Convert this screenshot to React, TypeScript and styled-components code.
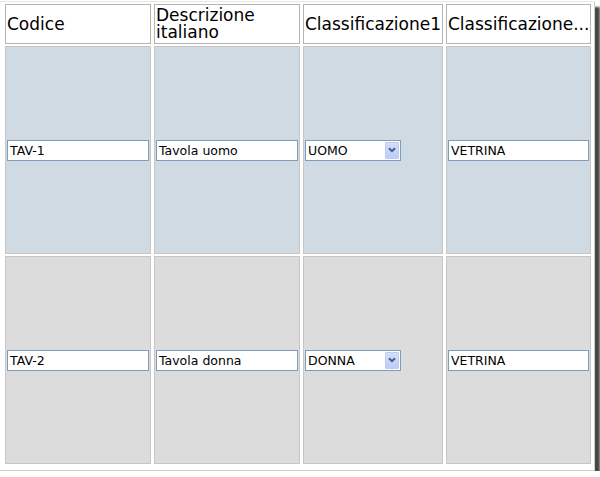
import React from "react";
import styled, { createGlobalStyle } from "styled-components";

const GlobalStyle = createGlobalStyle`
    html, body {
        margin: 0;
        padding: 0;
        background: #ffffff;
    }

    body {
        font-family: "DejaVu Sans", Verdana, sans-serif;
    }
`

const Frame = styled.div`
    width: 595px;
    height: 470px;
    margin-top: 1px;
    box-sizing: border-box;
    border-top: 1px solid #ebe7da;
    border-right: 1px solid #cfcfcf;
    border-bottom: 1px solid #cfcfcf;
    background: #ffffff;
    box-shadow: 5px 6px 2px rgba(0, 0, 0, 0.72);
    padding-left: 2px;
`

const Grid = styled.table`
    table-layout: fixed;
    width: 592px;
    border-collapse: separate;
    border-spacing: 3px 2px;
`

const HeaderCell = styled.th<{ $nowrap?: boolean }>`
    height: 40px;
    box-sizing: border-box;
    padding: 0 1px;
    border: 1px solid #b4b4b4;
    background: #ffffff;
    color: #000000;
    font-size: 17px;
    line-height: 17px;
    font-weight: normal;
    text-align: left;
    vertical-align: middle;
    white-space: ${({ $nowrap }) => ($nowrap ? "nowrap" : "normal")};
    overflow: hidden;
`

const Cell = styled.td<{ $tone: "blue" | "grey" }>`
    height: 208px;
    box-sizing: border-box;
    padding: 0 1px;
    border: 1px solid #c6c6c6;
    background: ${({ $tone }) => ($tone === "blue" ? "#cfdae3" : "#dcdcdc")};
    vertical-align: middle;
`

const TextBox = styled.input`
    display: block;
    width: 100%;
    height: 21px;
    box-sizing: border-box;
    margin: 0;
    padding: 0 2px;
    border: 1px solid #7f9db9;
    background: #ffffff;
    color: #000000;
    font-family: "DejaVu Sans", Verdana, sans-serif;
    font-size: 12.5px;
    outline: none;
`

const SelectBox = styled.div`
    display: flex;
    align-items: center;
    width: 96px;
    height: 21px;
    box-sizing: border-box;
    border: 1px solid #7f9db9;
    background: #ffffff;
    font-size: 12.5px;
    color: #000000;
`

const SelectValue = styled.span`
    flex: 1;
    padding-left: 2px;
`

const SelectArrow = styled.span`
    display: flex;
    align-items: center;
    justify-content: center;
    width: 14px;
    height: 17px;
    margin-right: 1px;
    box-sizing: border-box;
    border: 1px solid #bccbf0;
    border-radius: 1px;
    background: linear-gradient(#d3defd, #bccdf8);
`

type Row = {
    codice: string
    descrizione: string
    classe1: string
    classe2: string
    tone: "blue" | "grey"
}

const rows: Row[] = [
    { codice: "TAV-1", descrizione: "Tavola uomo", classe1: "UOMO", classe2: "VETRINA", tone: "blue" },
    { codice: "TAV-2", descrizione: "Tavola donna", classe1: "DONNA", classe2: "VETRINA", tone: "grey" },
]

const Chevron = () => (
    <svg width="8" height="6" viewBox="0 0 8 6">
        <path d="M1 1.2 L4 4.2 L7 1.2" fill="none" stroke="#4a5d86" strokeWidth="2" />
    </svg>
)

const App = () => {
    return (
        <>
            <GlobalStyle />
            <Frame>
                <Grid>
                    <colgroup>
                        <col style={{ width: 146 }} />
                        <col style={{ width: 146 }} />
                        <col style={{ width: 140 }} />
                        <col style={{ width: 145 }} />
                    </colgroup>
                    <thead>
                        <tr>
                            <HeaderCell>Codice</HeaderCell>
                            <HeaderCell>Descrizione italiano</HeaderCell>
                            <HeaderCell $nowrap>Classificazione1</HeaderCell>
                            <HeaderCell $nowrap>Classificazione...</HeaderCell>
                        </tr>
                    </thead>
                    <tbody>
                        {rows.map(row => (
                            <tr key={row.codice}>
                                <Cell $tone={row.tone}>
                                    <TextBox defaultValue={row.codice} />
                                </Cell>
                                <Cell $tone={row.tone}>
                                    <TextBox defaultValue={row.descrizione} />
                                </Cell>
                                <Cell $tone={row.tone}>
                                    <SelectBox>
                                        <SelectValue>{row.classe1}</SelectValue>
                                        <SelectArrow>
                                            <Chevron />
                                        </SelectArrow>
                                    </SelectBox>
                                </Cell>
                                <Cell $tone={row.tone}>
                                    <TextBox defaultValue={row.classe2} />
                                </Cell>
                            </tr>
                        ))}
                    </tbody>
                </Grid>
            </Frame>
        </>
    )
}

export default App
